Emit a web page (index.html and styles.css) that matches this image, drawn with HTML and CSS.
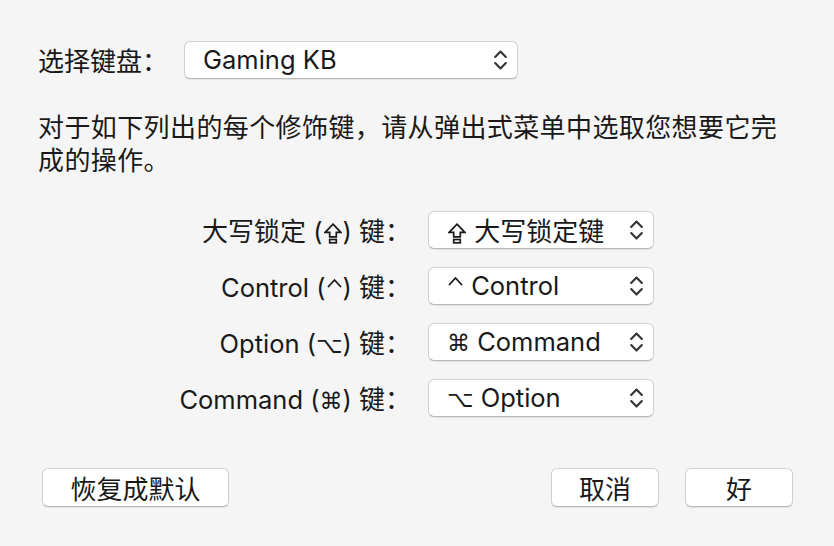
FILE: index.html
```html
<!DOCTYPE html>
<html lang="zh-CN">
<head>
<meta charset="utf-8">
<title>修饰键</title>
<link rel="stylesheet" href="styles.css">
</head>
<body>
<div class="dialog">
  <div class="kbd-row">
    <span class="label c">选择键盘：</span>
    <div class="popup wide">
      <span class="popup-text">Gaming KB</span>
      <svg class="chev" width="13" height="22" viewBox="0 0 13 22"><path d="M1.2 8 L6.5 2.5 L11.8 8 M1.2 14 L6.5 19.5 L11.8 14"/></svg>
    </div>
  </div>

  <p class="intro">对于如下列出的每个修饰键，请从弹出式菜单中选取您想要它完成的操作。</p>

  <div class="mods">
    <span class="mod-label"><span class="c">大写锁定</span> (<svg class="caps" width="18" height="21" viewBox="0 0 18 21"><path d="M9 1.2 L16.8 9.3 H12.3 V13.8 H5.7 V9.3 H1.2 Z"/><rect x="5.7" y="16.5" width="6.6" height="3.3"/></svg>) <span class="c">键：</span></span>
    <div class="popup">
      <span class="popup-text"><svg class="caps" width="18" height="21" viewBox="0 0 18 21"><path d="M9 1.2 L16.8 9.3 H12.3 V13.8 H5.7 V9.3 H1.2 Z"/><rect x="5.7" y="16.5" width="6.6" height="3.3"/></svg> <span class="c">大写锁定键</span></span>
      <svg class="chev" width="13" height="22" viewBox="0 0 13 22"><path d="M1.2 8 L6.5 2.5 L11.8 8 M1.2 14 L6.5 19.5 L11.8 14"/></svg>
    </div>

    <span class="mod-label">Control (<svg class="caret" width="15" height="10" viewBox="0 0 15 10"><path d="M1.5 8.5 L7.5 2 L13.5 8.5"/></svg>) <span class="c">键：</span></span>
    <div class="popup">
      <span class="popup-text"><svg class="caret" width="15" height="10" viewBox="0 0 15 10"><path d="M1.5 8.5 L7.5 2 L13.5 8.5"/></svg> Control</span>
      <svg class="chev" width="13" height="22" viewBox="0 0 13 22"><path d="M1.2 8 L6.5 2.5 L11.8 8 M1.2 14 L6.5 19.5 L11.8 14"/></svg>
    </div>

    <span class="mod-label">Option (<span class="sym">⌥</span>) <span class="c">键：</span></span>
    <div class="popup">
      <span class="popup-text"><span class="sym">⌘</span> Command</span>
      <svg class="chev" width="13" height="22" viewBox="0 0 13 22"><path d="M1.2 8 L6.5 2.5 L11.8 8 M1.2 14 L6.5 19.5 L11.8 14"/></svg>
    </div>

    <span class="mod-label">Command (<span class="sym">⌘</span>) <span class="c">键：</span></span>
    <div class="popup">
      <span class="popup-text"><span class="sym">⌥</span> Option</span>
      <svg class="chev" width="13" height="22" viewBox="0 0 13 22"><path d="M1.2 8 L6.5 2.5 L11.8 8 M1.2 14 L6.5 19.5 L11.8 14"/></svg>
    </div>
  </div>

  <div class="buttons">
    <button class="btn reset c">恢复成默认</button>
    <div class="spacer"></div>
    <button class="btn c">取消</button>
    <button class="btn c">好</button>
  </div>
</div>
</body>
</html>
```

FILE: styles.css
```css
html, body {
  margin: 0;
  padding: 0;
  background: #f5f5f5;
}
body {
  font-family: Inter, "Noto Sans CJK SC", sans-serif;
  font-size: 25.5px;
  color: #191919;
  width: 834px;
  height: 546px;
  overflow: hidden;
}
.c {
  font-family: "Noto Sans CJK SC", sans-serif;
  font-size: 26px;
}
.sym {
  font-family: "DejaVu Sans", sans-serif;
  font-size: 23px;
}
.dialog {
  padding: 41px 38px 0 38px;
}
.kbd-row {
  display: flex;
  align-items: center;
  gap: 16px;
  height: 38px;
}
.label {
  line-height: 38px;
}
.popup {
  display: flex;
  align-items: center;
  height: 38px;
  box-sizing: border-box;
  background: #fff;
  border: 1px solid #d0d0d0;
  border-bottom-color: #b9b9b9;
  border-radius: 6px;
  box-shadow: 0 1px 1px rgba(0, 0, 0, 0.08);
  padding: 0 10px 0 18px;
}
.popup.wide {
  width: 334px;
}
.popup-text {
  flex: 1;
  white-space: nowrap;
  line-height: 36px;
  height: 36px;
}
.chev {
  flex: none;
  fill: none;
  stroke: #333;
  stroke-width: 2.1;
  stroke-linecap: round;
  stroke-linejoin: round;
}
.caps {
  fill: none;
  stroke: #191919;
  stroke-width: 1.7;
  vertical-align: -3px;
  margin: 0 1px;
}
.caret {
  fill: none;
  stroke: #191919;
  stroke-width: 1.8;
  stroke-linecap: round;
  stroke-linejoin: miter;
  vertical-align: 9px;
  margin: 0 1px;
}
.intro {
  margin: 30px 0 0 0;
  font-family: "Noto Sans CJK SC", sans-serif;
  font-size: 26px;
  letter-spacing: 0.4px;
  line-height: 33px;
  width: 758px;
}
.mods {
  display: grid;
  grid-template-columns: 373px 226px;
  grid-auto-rows: 38px;
  column-gap: 17px;
  row-gap: 18px;
  margin-top: 36px;
}
.mod-label {
  justify-self: end;
  align-self: center;
  white-space: nowrap;
  line-height: 38px;
  height: 38px;
}
.buttons {
  display: flex;
  margin-top: 51px;
  padding-left: 4px;
  padding-right: 3px;
  gap: 26px;
}
.spacer {
  flex: 1;
}
.btn {
  height: 39px;
  box-sizing: border-box;
  background: #fff;
  border: 1px solid #d0d0d0;
  border-bottom-color: #b9b9b9;
  border-radius: 6px;
  box-shadow: 0 1px 1px rgba(0, 0, 0, 0.08);
  color: #191919;
  width: 108px;
  padding: 0;
  line-height: 37px;
}
.btn.reset {
  width: 187px;
}
```
